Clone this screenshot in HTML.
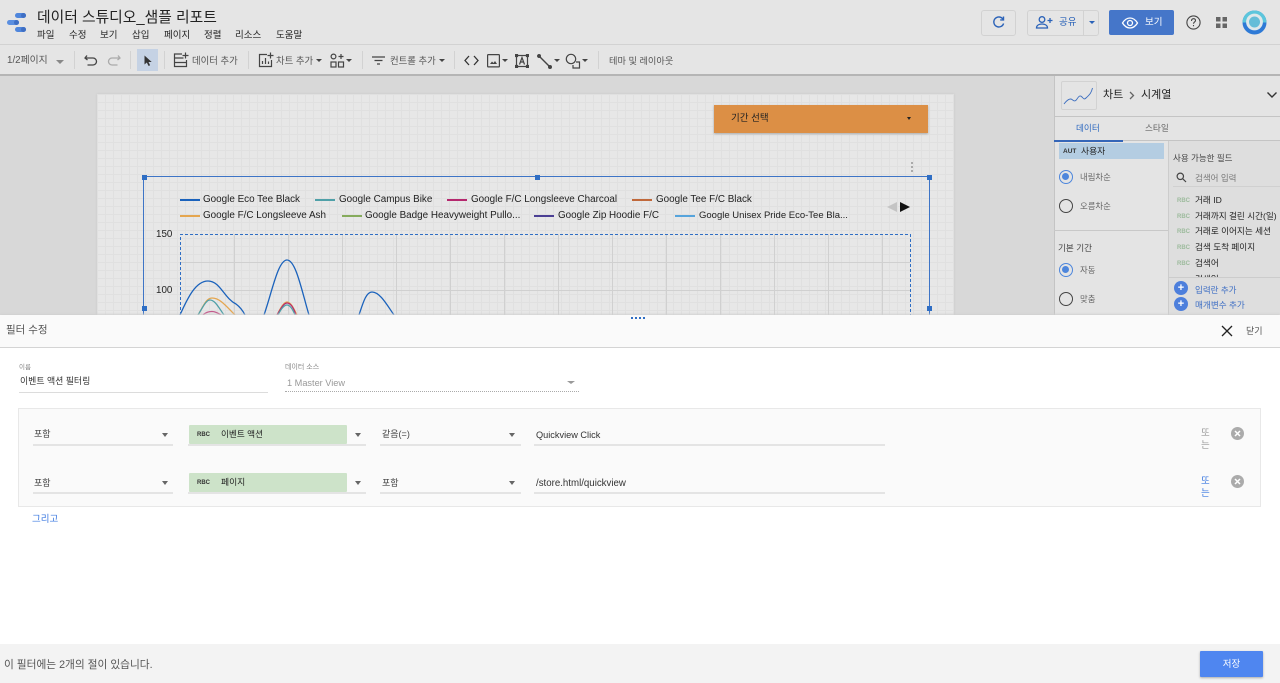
<!DOCTYPE html>
<html lang="ko"><head><meta charset="utf-8"><title>데이터 스튜디오</title>
<style>
*{box-sizing:border-box}
html,body{margin:0;padding:0;width:1280px;height:683px;overflow:hidden;background:#d8d8d8}
body{font-family:"Liberation Sans","Noto Sans CJK KR",sans-serif;position:relative;color:#333;filter:blur(.3px)}
.a{position:absolute;white-space:nowrap;transform:translateY(1px)}
.b{position:absolute}
.m{font-size:9.5px;top:28px;line-height:14px;color:#222}
.t{font-size:9.4px;top:53px;line-height:14px;color:#555}
.sep{position:absolute;top:51px;width:1px;height:18px;background:#d2d2d2}
.caret{position:absolute;width:0;height:0;border-left:3px solid transparent;border-right:3px solid transparent;border-top:3px solid #444}
.leg{position:absolute;font-size:9.9px;line-height:14px;color:#222;white-space:nowrap}
.ll{position:absolute;height:1.5px;width:20px}
.h{position:absolute;width:5px;height:5px;background:#2f6ec4}
.fl{font-size:8.6px;color:#222;line-height:13px}
.rad{position:absolute;left:1059px;width:14px;height:14px;border-radius:50%;border:1.5px solid #444}
.rad.on{border-color:#4d86dc}
.rad.on:after{content:"";position:absolute;left:2px;top:2px;width:7px;height:7px;border-radius:50%;background:#4d86dc}
.ul{position:absolute;height:2px;background:#e4e4e4}
.abc{position:absolute;font-size:6px;font-weight:bold;color:#9dbb9d;line-height:8px}
.abcd{position:absolute;font-size:6px;font-weight:bold;color:#333;line-height:8px}
.green{position:absolute;left:189px;width:158px;height:19px;background:#cde3c9;border-radius:1px}
.plus{position:absolute;left:1174px;width:14px;height:14px;border-radius:50%;background:#4d7fdc;color:#fff;font-size:11px;line-height:14px;text-align:center;font-weight:bold}
.x{position:absolute;left:1231px;width:13px;height:13px;border-radius:50%;background:#ababab}
</style></head><body>

<!-- Header -->
<div class="b" style="left:0;top:0;width:1280px;height:45px;background:#e5e5e5;border-bottom:1px solid #d2d2d2"></div>
<div class="b" style="left:0;top:45px;width:1280px;height:31px;background:#e5e5e5;border-bottom:2px solid #b5b5b5"></div>

<svg class="b" style="left:6px;top:12px" width="22" height="22" viewBox="0 0 22 22">
<rect x="9" y="1" width="11" height="5" rx="2.5" fill="#4f86dc"/><circle cx="17.5" cy="3.5" r="2.5" fill="#3f6fc4"/>
<rect x="1" y="8" width="12" height="5" rx="2.5" fill="#5b8fe0"/><circle cx="10.5" cy="10.5" r="2.5" fill="#3f6fc4"/>
<rect x="9" y="15" width="11" height="5" rx="2.5" fill="#4f86dc"/><circle cx="17.5" cy="17.5" r="2.5" fill="#3f6fc4"/>
</svg>
<div class="a" style="left:37px;top:7px;font-size:14.8px;line-height:20px;color:#222">데이터 스튜디오_샘플 리포트</div>
<div class="a m" style="left:37px">파일</div>
<div class="a m" style="left:69px">수정</div>
<div class="a m" style="left:100px">보기</div>
<div class="a m" style="left:132px">삽입</div>
<div class="a m" style="left:164px">페이지</div>
<div class="a m" style="left:204px">정렬</div>
<div class="a m" style="left:235px">리소스</div>
<div class="a m" style="left:276px">도움말</div>

<!-- header right -->
<div class="b" style="left:981px;top:10px;width:35px;height:26px;border:1px solid #d2d2d2;border-radius:3px"></div>
<svg class="b" style="left:991px;top:15px" width="15" height="15" viewBox="0 0 15 15" fill="none" stroke="#2a62b8" stroke-width="1.4"><path d="M12 4.2A5 5 0 1 0 12.6 8.5"/><path d="M12.5 1.5v3.4H9.2" /></svg>
<div class="b" style="left:1027px;top:10px;width:72px;height:26px;border:1px solid #d2d2d2;border-radius:3px"></div>
<div class="b" style="left:1083px;top:10px;width:1px;height:26px;background:#d2d2d2"></div>
<svg class="b" style="left:1035px;top:15px" width="18" height="15" viewBox="0 0 18 15" fill="none" stroke="#2a62b8" stroke-width="1.3"><circle cx="7" cy="4.5" r="2.8"/><path d="M1.5 13c0-3 3-4 5.5-4s5.500 1 5.500 4z"/><path d="M12.500 5.500h5M15 3v5"/></svg>
<div class="a" style="left:1059px;top:15px;font-size:9.500px;line-height:14px;color:#2a62b8">공유</div>
<div class="caret" style="left:1089px;top:21px;border-top-color:#2a62b8"></div>
<div class="b" style="left:1109px;top:10px;width:65px;height:25px;background:#4576c9;border-radius:2px"></div>
<svg class="b" style="left:1121px;top:16px" width="18" height="14" viewBox="0 0 18 14" fill="none" stroke="#fff" stroke-width="1.300"><path d="M1.500 7C4 3 6.500 2 9 2s5 1 7.500 5C14 11 11.500 12 9 12S4 11 1.500 7z"/><circle cx="9" cy="7" r="2.500"/></svg>
<div class="a" style="left:1145px;top:15px;font-size:9.500px;line-height:14px;color:#fff">보기</div>
<svg class="b" style="left:1186px;top:15px" width="15" height="15" viewBox="0 0 15 15" fill="none" stroke="#444" stroke-width="1.100"><circle cx="7.500" cy="7.500" r="6.600"/><path d="M5.500 6c0-3 4-3 4-.5 0 1.500-2 1.500-2 3.300M7.500 10v1.300"/></svg>
<svg class="b" style="left:1216px;top:17px" width="12" height="12" viewBox="0 0 12 12" fill="#666"><rect x="0" y="0" width="4.500" height="4.500"/><rect x="6.500" y="0" width="4.500" height="4.500"/><rect x="0" y="6.500" width="4.500" height="4.500"/><rect x="6.500" y="6.500" width="4.500" height="4.500"/></svg>
<svg class="b" style="left:1242px;top:10px" width="25" height="25" viewBox="0 0 25 25"><circle cx="12.500" cy="12.500" r="12" fill="#2e7ad6"/><path d="M0.500 12.500a12 12 0 0 1 24 0z" fill="#5cc6dc"/><circle cx="12.500" cy="12" r="8.400" fill="#dfe8ea"/><circle cx="12.500" cy="12" r="5.500" fill="#65bdd8"/></svg>

<!-- toolbar -->
<div class="a t" style="left:7px;font-size:9.800px">1/2페이지</div>
<div class="caret" style="left:56px;top:60px;border-left-width:4px;border-right-width:4px;border-top:4px solid #888"></div>
<div class="sep" style="left:74px"></div>
<svg class="b" style="left:84px;top:53px" width="14" height="14" viewBox="0 0 14 14" fill="none" stroke="#444" stroke-width="1.300"><path d="M3 2.500 1 5l2.500 2M1.500 5H9a3.500 3.500 0 0 1 0 7H3.500"/></svg>
<svg class="b" style="left:107px;top:53px" width="14" height="14" viewBox="0 0 14 14" fill="none" stroke="#aaa" stroke-width="1.300"><path d="M11 2.500 13 5l-2.500 2M12.500 5H5a3.500 3.500 0 0 0 0 7h5.500"/></svg>
<div class="sep" style="left:130px"></div>
<div class="b" style="left:137px;top:49px;width:21px;height:22px;background:#c5d2e4"></div>
<svg class="b" style="left:143px;top:55px" width="10" height="12" viewBox="0 0 10 12" fill="#333"><path d="M1.500 0.500v9l2.300-2 1.800 3.500 1.500-.8L5.500 7H8.700z"/></svg>
<div class="sep" style="left:164px"></div>
<svg class="b" style="left:173px;top:52px" width="16" height="16" viewBox="0 0 16 16" fill="none" stroke="#444" stroke-width="1.200"><path d="M9 2H1.500v12.500h12V8M1.500 6h9M1.500 10.500h12M12.500 0.500v6M9.500 3.500h6"/></svg>
<div class="a t" style="left:192px">데이터 추가</div>
<div class="sep" style="left:248px"></div>
<svg class="b" style="left:258px;top:52px" width="16" height="16" viewBox="0 0 16 16" fill="none" stroke="#444" stroke-width="1.200"><path d="M9 2.500H1.500v12h12V8M4.500 12V9M7.500 12V6M10.500 12V9.500M12.500 0.500v6M9.500 3.500h6"/></svg>
<div class="a t" style="left:276px">차트 추가</div>
<div class="caret" style="left:316px;top:59px"></div>
<svg class="b" style="left:330px;top:53px" width="15" height="15" viewBox="0 0 15 15" fill="none" stroke="#444" stroke-width="1.200"><circle cx="3.500" cy="3.500" r="2.400"/><path d="M11 1v5M8.500 3.500h5"/><rect x="1" y="9" width="5" height="5"/><rect x="8.500" y="9" width="5" height="5"/></svg>
<div class="caret" style="left:346px;top:59px"></div>
<div class="sep" style="left:362px"></div>
<svg class="b" style="left:371px;top:55px" width="15" height="11" viewBox="0 0 15 11" fill="none" stroke="#444" stroke-width="1.300"><path d="M1 2h13M3.500 5.500h8M6 9h3"/></svg>
<div class="a t" style="left:390px">컨트롤 추가</div>
<div class="caret" style="left:439px;top:59px"></div>
<div class="sep" style="left:454px"></div>
<svg class="b" style="left:464px;top:55px" width="15" height="11" viewBox="0 0 15 11" fill="none" stroke="#333" stroke-width="1.300"><path d="M5 1 1 5.500 5 10M10 1l4 4.500L10 10"/></svg>
<svg class="b" style="left:487px;top:54px" width="13" height="14" viewBox="0 0 13 14" fill="none" stroke="#444" stroke-width="1.200"><rect x="0.600" y="0.600" width="11.800" height="12.300" rx="0.800"/><path d="M3 10l2-2.500 1.500 1.500 1.500-2 2 3z" fill="#444" stroke="none"/></svg>
<div class="caret" style="left:502px;top:59px"></div>
<svg class="b" style="left:515px;top:54px" width="14" height="14" viewBox="0 0 14 14" fill="none" stroke="#444" stroke-width="1.200"><rect x="1.500" y="1.500" width="11" height="11"/><path d="M4.500 10.500 7 3.500l2.500 7M5.500 8h3"/><rect x="0" y="0" width="2.500" height="2.500" fill="#444"/><rect x="11.500" y="0" width="2.500" height="2.500" fill="#444"/><rect x="0" y="11.500" width="2.500" height="2.500" fill="#444"/><rect x="11.500" y="11.500" width="2.500" height="2.500" fill="#444"/></svg>
<svg class="b" style="left:537px;top:54px" width="15" height="15" viewBox="0 0 15 15" fill="none" stroke="#444" stroke-width="1.400"><path d="M2 2l11 11"/><circle cx="2" cy="2" r="1.300" fill="#444"/><circle cx="13" cy="13" r="1.300" fill="#444"/></svg>
<div class="caret" style="left:554px;top:59px"></div>
<svg class="b" style="left:565px;top:53px" width="16" height="16" viewBox="0 0 16 16" fill="none" stroke="#444" stroke-width="1.200"><circle cx="6" cy="6" r="4.700"/><path d="M11 9h3.500v6H8v-3"/></svg>
<div class="caret" style="left:582px;top:59px"></div>
<div class="sep" style="left:598px"></div>
<div class="a t" style="left:609px;font-size:9.200px">테마 및 레이아웃</div>

<!-- Canvas -->
<div class="b" style="left:97px;top:94px;width:857px;height:222px;background-color:#e7e7e7;background-image:linear-gradient(#e0e0e0 1px,transparent 1px),linear-gradient(90deg,#e0e0e0 1px,transparent 1px);background-size:8px 8px;box-shadow:0 0 2px #c4c4c4"></div>

<!-- date control -->
<div class="b" style="left:714px;top:105px;width:214px;height:28px;background:#dc8f45;box-shadow:0 1px 2px #aaa"></div>
<div class="a" style="left:731px;top:110px;font-size:9.500px;line-height:15px;color:#222">기간 선택</div>
<div class="caret" style="left:907px;top:117px;border-left-width:2.500px;border-right-width:2.500px;border-top:3px solid #222"></div>
<div class="b" style="left:911px;top:162px;width:2px;height:2px;background:#aaa;box-shadow:0 4px 0 #aaa,0 8px 0 #aaa"></div>

<!-- chart selection -->
<div class="b" style="left:144px;top:176px;width:786px;height:1px;background:#3d74c6"></div>
<div class="b" style="left:143px;top:177px;width:1px;height:140px;background:#3d74c6"></div>
<div class="b" style="left:929px;top:177px;width:1px;height:140px;background:#3d74c6"></div>
<div class="h" style="left:142px;top:175px"></div>
<div class="h" style="left:535px;top:175px"></div>
<div class="h" style="left:927px;top:175px"></div>
<div class="h" style="left:142px;top:306px"></div>
<div class="h" style="left:927px;top:306px"></div>

<!-- chart -->
<svg class="b" style="left:140px;top:225px" width="780" height="90" viewBox="140 225 780 90" fill="none">
<g stroke="#d0d0d0" stroke-width="1">
<path d="M180.500 262.500H910M180.500 290.500H910"/>
<path d="M234.500 234V315M288.500 234V315M342.500 234V315M396.500 234V315M450.500 234V315M504.500 234V315M558.500 234V315M612.500 234V315M666.500 234V315M720.500 234V315M774.500 234V315M828.500 234V315M882.500 234V315"/>
</g>
<path d="M180.500 315V234.500H910.500V315" stroke="#2f6ec4" stroke-dasharray="3 2"/>
<path d="M198 315C203 307 206 298 212 298C220 298 226 306 235 315" stroke="#e5a64f" stroke-width="1.300"/>
<path d="M198 315C203 307 206 300 210 300C215 300 219 308 224 315" stroke="#4fa0a8" stroke-width="1.300"/>
<path d="M203 315C206 312 209 311.500 212 311.500C215 311.500 218 313 221 315" stroke="#c45a8c" stroke-width="1.300"/>
<path d="M277 315C281 307 284 302 287 302C291 302 294 309 297 315" stroke="#e5a64f" stroke-width="1.300"/>
<path d="M277 315C281 308 284 303 287 303C291 303 294 309 296 315" stroke="#b5286e" stroke-width="1.200"/>
<path d="M278 315C281 309 284 305 287 305C290 305 293 310 295 315" stroke="#4fa0a8" stroke-width="1.300"/>
<path d="M180 315C188 297 196 281 208 281C220 281 224 298 236 304C240 307 243 311 245 315" stroke="#1a62bc" stroke-width="1.300"/>
<path d="M264 315C272 292 278 260 287 260C296 260 302 292 309 315" stroke="#1a62bc" stroke-width="1.300"/>
<path d="M359 315C363 303 366 292 372 292C380 292 387 305 394 315" stroke="#1a62bc" stroke-width="1.300"/>
</svg>
<div class="a" style="left:156px;top:227px;font-size:9.800px;line-height:14px;color:#222">150</div>
<div class="a" style="left:156px;top:283px;font-size:9.800px;line-height:14px;color:#222">100</div>

<!-- legend -->
<div class="ll" style="left:180px;top:199px;background:#1a62bc"></div><div class="leg" style="left:203px;top:193px">Google Eco Tee Black</div>
<div class="ll" style="left:315px;top:199px;background:#4fa0a8"></div><div class="leg" style="left:339px;top:193px">Google Campus Bike</div>
<div class="ll" style="left:447px;top:199px;background:#b5286e"></div><div class="leg" style="left:471px;top:193px">Google F/C Longsleeve Charcoal</div>
<div class="ll" style="left:632px;top:199px;background:#c0683a"></div><div class="leg" style="left:656px;top:193px">Google Tee F/C Black</div>
<div class="ll" style="left:180px;top:215px;background:#e5a64f"></div><div class="leg" style="left:203px;top:209px">Google F/C Longsleeve Ash</div>
<div class="ll" style="left:342px;top:215px;background:#86ab5c"></div><div class="leg" style="left:365px;top:209px">Google Badge Heavyweight Pullo...</div>
<div class="ll" style="left:534px;top:215px;background:#4b3f94"></div><div class="leg" style="left:558px;top:209px">Google Zip Hoodie F/C</div>
<div class="ll" style="left:675px;top:215px;background:#56a4dc"></div><div class="leg" style="left:699px;top:209px;font-size:9.500px">Google Unisex Pride Eco-Tee Bla...</div>
<div class="b" style="left:887px;top:202px;width:0;height:0;border-top:5px solid transparent;border-bottom:5px solid transparent;border-right:10px solid #c4c4c4"></div>
<div class="b" style="left:900px;top:202px;width:0;height:0;border-top:5px solid transparent;border-bottom:5px solid transparent;border-left:10px solid #111"></div>

<!-- Right panel -->
<div class="b" style="left:1054px;top:76px;width:226px;height:240px;background:#e4e4e4;border-left:1px solid #c4c4c4"></div>
<div class="b" style="left:1061px;top:81px;width:36px;height:29px;border:1px solid #d2d2d2;border-radius:2px"></div>
<svg class="b" style="left:1063px;top:86px" width="32" height="20" viewBox="0 0 32 20" fill="none" stroke="#3d6fc0" stroke-width="0.900"><path d="M1 18C4 14 7 12 9 13.500S12 16 14 13s3-4 5-2 2 3 4.500.5S28 8 29.500 2"/></svg>
<div class="a" style="left:1103px;top:86px;font-size:11px;line-height:16px;color:#222">차트</div>
<svg class="b" style="left:1129px;top:91px" width="6" height="9" viewBox="0 0 6 9" fill="none" stroke="#666" stroke-width="1.300"><path d="M1 1l3.500 3.500L1 8"/></svg>
<div class="a" style="left:1141px;top:86px;font-size:11px;line-height:16px;color:#222">시계열</div>
<svg class="b" style="left:1266px;top:91px" width="12" height="8" viewBox="0 0 12 8" fill="none" stroke="#333" stroke-width="1.400"><path d="M1.500 1.500 6 6l4.500-4.500"/></svg>
<div class="b" style="left:1055px;top:116px;width:225px;height:1px;background:#c4c4c4"></div>
<div class="a" style="left:1076px;top:120px;font-size:8.600px;line-height:15px;color:#2f6ac0">데이터</div>
<div class="a" style="left:1145px;top:120px;font-size:8.600px;line-height:15px;color:#666">스타일</div>
<div class="b" style="left:1055px;top:140px;width:225px;height:1px;background:#c4c4c4"></div>
<div class="b" style="left:1054px;top:140px;width:69px;height:2px;background:#3566b8"></div>
<div class="b" style="left:1168px;top:141px;width:112px;height:175px;background:#dedede;border-left:1px solid #cccccc"></div>
<div class="b" style="left:1059px;top:143px;width:105px;height:16px;background:#b4cde2"></div>
<div class="a" style="left:1063px;top:146px;font-size:6.500px;font-weight:bold;line-height:9px;color:#333">AUT</div>
<div class="a" style="left:1081px;top:143px;font-size:8.800px;line-height:14px;color:#222">사용자</div>
<div class="rad on" style="top:170px"></div>
<div class="a" style="left:1080px;top:169px;font-size:8.400px;line-height:14px;color:#666">내림차순</div>
<div class="rad" style="top:199px"></div>
<div class="a" style="left:1080px;top:198px;font-size:8.400px;line-height:14px;color:#666">오름차순</div>
<div class="b" style="left:1054px;top:230px;width:114px;height:1px;background:#c8c8c8"></div>
<div class="a" style="left:1058px;top:240px;font-size:8.600px;line-height:14px;color:#444">기본 기간</div>
<div class="rad on" style="top:263px"></div>
<div class="a" style="left:1080px;top:262px;font-size:8.400px;line-height:14px;color:#666">자동</div>
<div class="rad" style="top:292px"></div>
<div class="a" style="left:1080px;top:291px;font-size:8.400px;line-height:14px;color:#666">맞춤</div>

<div class="a" style="left:1173px;top:150px;font-size:8.500px;line-height:14px;color:#444">사용 가능한 필드</div>
<svg class="b" style="left:1176px;top:172px" width="11" height="11" viewBox="0 0 11 11" fill="none" stroke="#444" stroke-width="1.200"><circle cx="4.300" cy="4.300" r="3.200"/><path d="M6.700 6.700 10 10"/></svg>
<div class="a" style="left:1195px;top:170px;font-size:8.500px;line-height:14px;color:#777">검색어 입력</div>
<div class="b" style="left:1173px;top:186px;width:107px;height:1px;background:#d0d0d0"></div>
<div class="abc" style="left:1177px;top:197px">RBC</div><div class="a fl" style="left:1195px;top:193px">거래 ID</div>
<div class="abc" style="left:1177px;top:213px">RBC</div><div class="a fl" style="left:1195px;top:209px">거래까지 걸린 시간(일)</div>
<div class="abc" style="left:1177px;top:228px">RBC</div><div class="a fl" style="left:1195px;top:224px">거래로 이어지는 세션</div>
<div class="abc" style="left:1177px;top:244px">RBC</div><div class="a fl" style="left:1195px;top:240px">검색 도착 페이지</div>
<div class="abc" style="left:1177px;top:260px">RBC</div><div class="a fl" style="left:1195px;top:256px">검색어</div>
<div class="a fl" style="left:1195px;top:272px">검색일</div>
<div class="b" style="left:1169px;top:277px;width:111px;height:39px;background:#dedede;border-top:1px solid #cccccc"></div>
<div class="plus" style="top:281px">+</div>
<div class="a" style="left:1195px;top:282px;font-size:8.500px;line-height:14px;color:#3f6fc4">입력란 추가</div>
<div class="plus" style="top:297px">+</div>
<div class="a" style="left:1195px;top:297px;font-size:8.600px;line-height:14px;color:#3f6fc4">매개변수 추가</div>

<!-- Modal -->
<div class="b" style="left:0;top:315px;width:1280px;height:368px;background:#fff;box-shadow:0 -1px 2px #d0d0d0"></div>
<div class="b" style="left:0;top:315px;width:1280px;height:33px;background:#fafafa;border-bottom:1px solid #d4d4d4"></div>
<div class="b" style="left:631px;top:317px;width:2px;height:2px;background:#2f6ec4;box-shadow:4px 0 0 #2f6ec4,8px 0 0 #2f6ec4,12px 0 0 #2f6ec4"></div>
<div class="a" style="left:6px;top:322px;font-size:10.500px;line-height:15px;color:#555">필터 수정</div>
<svg class="b" style="left:1221px;top:325px" width="12" height="12" viewBox="0 0 12 12" fill="none" stroke="#222" stroke-width="1.300"><path d="M1 1l10 10M11 1 1 11"/></svg>
<div class="a" style="left:1246px;top:323px;font-size:9px;line-height:14px;color:#555">닫기</div>

<div class="a" style="left:19px;top:362px;font-size:6.500px;line-height:9px;color:#888">이름</div>
<div class="a" style="left:20px;top:373px;font-size:8.900px;line-height:14px;color:#333">이벤트 액션 필터링</div>
<div class="ul" style="left:19px;top:392px;width:249px;height:1px;background:#dcdcdc"></div>
<div class="a" style="left:285px;top:362px;font-size:7px;line-height:9px;color:#888">데이터 소스</div>
<div class="a" style="left:287px;top:375px;font-size:9.200px;line-height:14px;color:#999">1 Master View</div>
<div class="caret" style="left:567px;top:381px;border-top-color:#999;border-left-width:4px;border-right-width:4px"></div>
<div class="b" style="left:285px;top:391px;width:294px;height:1px;border-top:1px dotted #aaa"></div>

<div class="b" style="left:18px;top:408px;width:1243px;height:99px;background:#fafafa;border:1px solid #e8e8e8"></div>

<!-- row 1 -->
<div class="a" style="left:34px;top:426px;font-size:9px;line-height:14px;color:#444">포함</div>
<div class="caret" style="left:162px;top:433px;border-left-width:3.500px;border-right-width:3.500px;border-top:4px solid #666"></div>
<div class="ul" style="left:33px;top:444px;width:140px"></div>
<div class="green" style="top:425px"></div>
<div class="abcd" style="left:197px;top:431px">RBC</div>
<div class="a" style="left:221px;top:426px;font-size:8.600px;line-height:14px;color:#222">이벤트 액션</div>
<div class="caret" style="left:355px;top:433px;border-left-width:3.500px;border-right-width:3.500px;border-top:4px solid #666"></div>
<div class="ul" style="left:188px;top:444px;width:178px"></div>
<div class="a" style="left:382px;top:426px;font-size:9px;line-height:14px;color:#444">같음(=)</div>
<div class="caret" style="left:509px;top:433px;border-left-width:3.500px;border-right-width:3.500px;border-top:4px solid #666"></div>
<div class="ul" style="left:380px;top:444px;width:141px"></div>
<div class="a" style="left:536px;top:427px;font-size:9.200px;line-height:14px;color:#333">Quickview Click</div>
<div class="ul" style="left:534px;top:444px;width:351px"></div>
<div class="a" style="left:1201px;top:427px;font-size:9.500px;line-height:12px;color:#999;white-space:normal;width:10px">또는</div>
<div class="x" style="top:427px"></div>
<svg class="b" style="left:1234px;top:430px" width="7" height="7" viewBox="0 0 7 7" stroke="#fff" stroke-width="1.500"><path d="M1 1l5 5M6 1 1 6"/></svg>

<!-- row 2 -->
<div class="a" style="left:34px;top:475px;font-size:9px;line-height:14px;color:#444">포함</div>
<div class="caret" style="left:162px;top:481px;border-left-width:3.500px;border-right-width:3.500px;border-top:4px solid #666"></div>
<div class="ul" style="left:33px;top:492px;width:140px"></div>
<div class="green" style="top:473px"></div>
<div class="abcd" style="left:197px;top:479px">RBC</div>
<div class="a" style="left:221px;top:474px;font-size:8.800px;line-height:14px;color:#222">페이지</div>
<div class="caret" style="left:355px;top:481px;border-left-width:3.500px;border-right-width:3.500px;border-top:4px solid #666"></div>
<div class="ul" style="left:188px;top:492px;width:178px"></div>
<div class="a" style="left:382px;top:475px;font-size:9px;line-height:14px;color:#444">포함</div>
<div class="caret" style="left:509px;top:481px;border-left-width:3.500px;border-right-width:3.500px;border-top:4px solid #666"></div>
<div class="ul" style="left:380px;top:492px;width:141px"></div>
<div class="a" style="left:536px;top:476px;font-size:9.700px;line-height:14px;color:#333">/store.html/quickview</div>
<div class="ul" style="left:534px;top:492px;width:351px"></div>
<div class="a" style="left:1201px;top:475px;font-size:9.500px;line-height:12px;color:#3b78e0;white-space:normal;width:10px">또는</div>
<div class="x" style="top:475px"></div>
<svg class="b" style="left:1234px;top:478px" width="7" height="7" viewBox="0 0 7 7" stroke="#fff" stroke-width="1.500"><path d="M1 1l5 5M6 1 1 6"/></svg>

<div class="a" style="left:32px;top:512px;font-size:9.500px;line-height:14px;color:#3b78e0">그리고</div>

<!-- footer -->
<div class="b" style="left:0;top:644px;width:1280px;height:39px;background:#f3f3f3"></div>
<div class="a" style="left:4px;top:656px;font-size:10.700px;line-height:16px;color:#555">이 필터에는 2개의 절이 있습니다.</div>
<div class="b" style="left:1200px;top:651px;width:63px;height:26px;background:#4f86f0;border-radius:1px;box-shadow:0 1px 2px #aaa;color:#fff;font-size:9.500px;line-height:28px;text-align:center">저장</div>

</body></html>
